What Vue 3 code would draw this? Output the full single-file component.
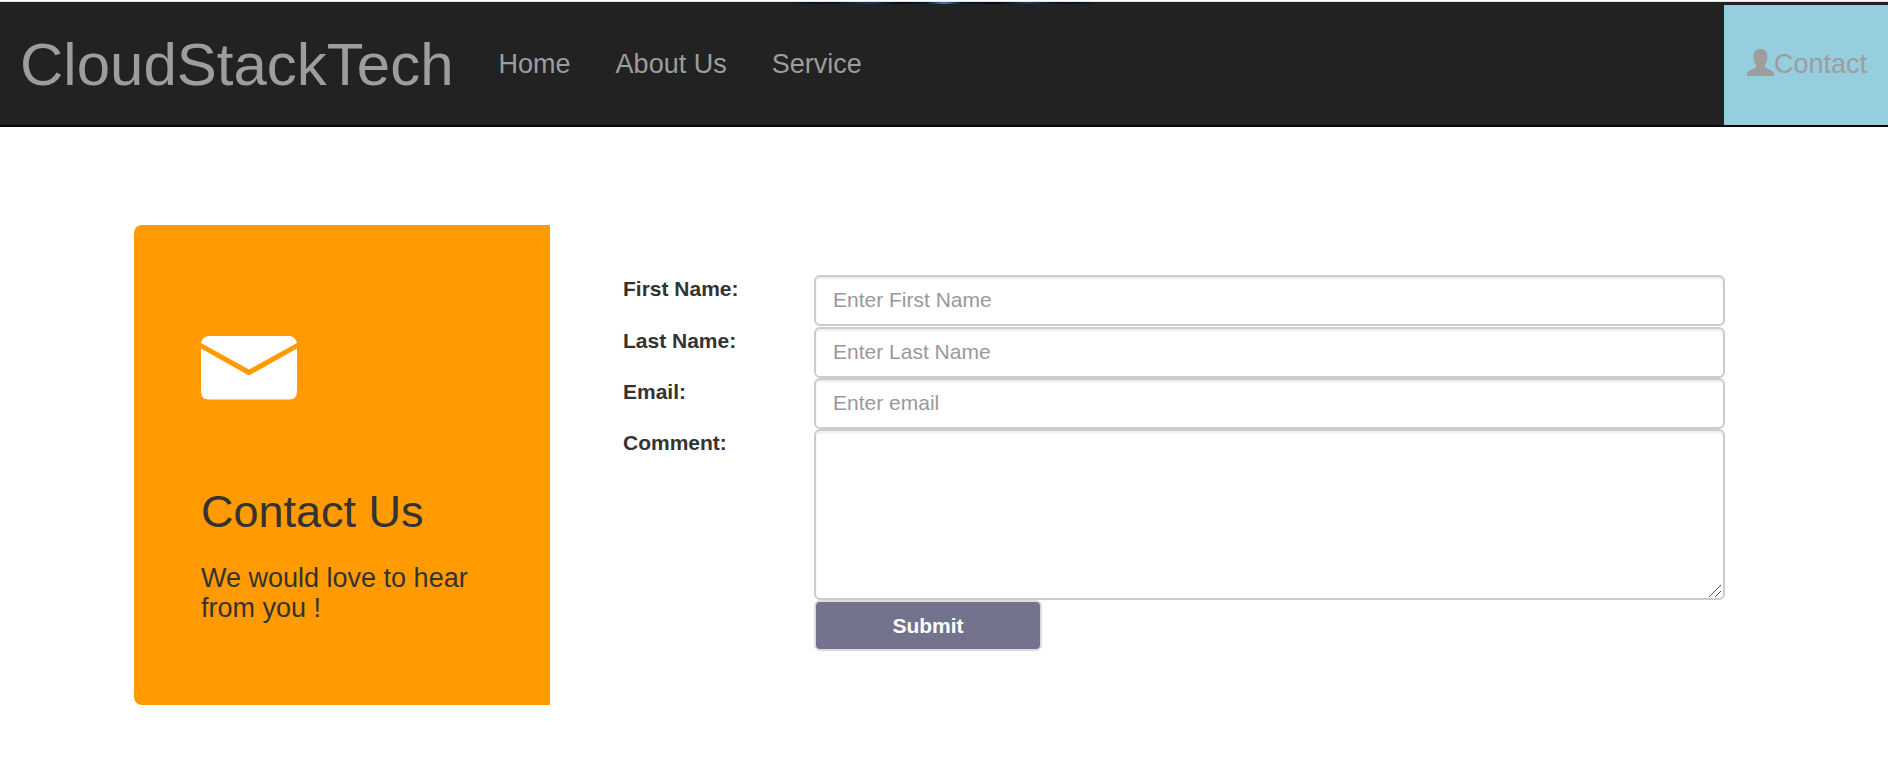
<script setup>
import { reactive } from 'vue'

const links = ['Home', 'About Us', 'Service']
const fields = [
  { id: 'first-name', label: 'First Name:', type: 'text', placeholder: 'Enter First Name' },
  { id: 'last-name', label: 'Last Name:', type: 'text', placeholder: 'Enter Last Name' },
  { id: 'email', label: 'Email:', type: 'email', placeholder: 'Enter email' },
]
const form = reactive({ 'first-name': '', 'last-name': '', email: '', comment: '' })
</script>

<template>
  <div class="page">
    <header class="banner">
      <div class="strip"></div>
      <nav class="navbar">
        <a class="brand" href="#">CloudStackTech</a>
        <a v-for="link in links" :key="link" class="link" href="#">{{ link }}</a>
        <a class="link contact" href="#">
          <svg class="user" viewBox="0 0 27 27" aria-hidden="true">
            <path d="M13.500 0C17.500 0 20.200 2.500 20.200 6.500V9.500C20.200 12.500 19.300 14 18 15.500V18.500C21 20.300 26 21.500 27 24V27H0V24C1 21.500 6 20.300 9 18.500V15.500C7.500 14 6.500 12.500 6.500 9.500V6.500C6.500 2.500 9.500 0 13.500 0Z" />
          </svg>
          <span>Contact</span>
        </a>
      </nav>
    </header>

    <main class="content">
      <section class="info">
        <svg class="mail" viewBox="0 0 96 64" aria-hidden="true">
          <path d="M8 0H88C92 0 95 3 96 7L48 33.500L0 7C1 3 4 0 8 0Z" />
          <path d="M0 12.500L48 39.500L96 12.500V55.500Q96 63.500 88 63.500H8Q0 63.500 0 55.500Z" />
        </svg>
        <h2>Contact Us</h2>
        <h4>We would love to hear from you !</h4>
      </section>

      <form class="form" @submit.prevent>
        <template v-for="field in fields" :key="field.id">
          <label :for="field.id">{{ field.label }}</label>
          <input :id="field.id" v-model="form[field.id]" class="control" :type="field.type" :placeholder="field.placeholder" />
        </template>
        <label for="comment">Comment:</label>
        <textarea id="comment" v-model="form.comment" class="control" rows="5"></textarea>
        <button type="submit">Submit</button>
      </form>
    </main>
  </div>
</template>

<style>
body {
  margin: 0;
  background: #fff;
}
</style>

<style scoped>
.page,
.page * {
  box-sizing: border-box;
}
.page {
  font-family: "Liberation Sans", Arial, sans-serif;
  font-size: 21px;
  line-height: 28px;
  color: #333;
}
.banner {
  border-top: 1px solid #dee3e6;
  border-bottom: 2px solid #080808;
  background: #222;
}
.page {
  padding-top: 1px;
}
.strip {
  width: 300px;
  height: 2px;
  margin: 0 auto;
  background: linear-gradient(90deg, #0b1c33, #0a1322 12%, #14375f 26%, #060b16 34%, #0b1a30 44%, #3f78bd 50%, #0b1a30 56%, #060b16 68%, #163a5c 78%, #0a1322 88%, #0b1c33);
}
.navbar {
  display: flex;
  align-items: stretch;
  padding-top: 1px;
}
.navbar a {
  color: #9d9d9d;
  text-decoration: none;
}
.brand {
  padding: 30px 22px 30px 20px;
  font-size: 60px;
  line-height: 60px;
}
.link {
  display: flex;
  align-items: center;
  padding: 0 22px 2px 23px;
  font-size: 27px;
}
.contact {
  margin-left: auto;
  padding-right: 21px;
  background: #96cddf;
}
.user {
  width: 27px;
  height: 27px;
  margin-bottom: 4px;
  fill: #9d9d9d;
}
.content {
  display: flex;
  padding: 98px 134px 40px;
}
.info {
  flex: 0 0 416px;
  padding: 111px 67px 82px;
  border-radius: 8px 0 0 8px;
  background: #ff9b00;
}
.mail {
  display: block;
  width: 96px;
  height: 64px;
  fill: #fff;
}
h2 {
  margin: 87px 0 26px;
  font-size: 45px;
  line-height: 50px;
  font-weight: 400;
}
h4 {
  margin: 0;
  font-size: 27px;
  line-height: 30px;
  font-weight: 400;
}
.form {
  flex: 1;
  display: grid;
  grid-template-columns: 191px 1fr;
  grid-template-rows: 52px;
  align-content: start;
  padding: 50px 29px 0 73px;
}
label {
  font-weight: 700;
}
.control {
  width: 100%;
  height: 51px;
  margin: 0;
  padding: 8px 17px 10px;
  border: 2px solid #ccc;
  border-radius: 6px;
  background: #fff;
  box-shadow: inset 0 2px 2px rgba(0, 0, 0, 0.075);
  font: inherit;
  color: #555;
}
.control::placeholder {
  color: #999;
  opacity: 1;
}
textarea.control {
  display: block;
  height: 171px;
  resize: vertical;
}
textarea.control::-webkit-resizer {
  background: url("data:image/svg+xml,%3Csvg xmlns='http://www.w3.org/2000/svg' width='15' height='15'%3E%3Cpath d='M1 14L13 2M7 14L13 8' stroke='%23555' fill='none'/%3E%3C/svg%3E") no-repeat right bottom;
}
button {
  grid-column: 2;
  width: 228px;
  height: 51px;
  border: 2px solid #ddd;
  border-radius: 6px;
  background: #74738d;
  font: inherit;
  font-weight: 700;
  color: #fff;
}
</style>
